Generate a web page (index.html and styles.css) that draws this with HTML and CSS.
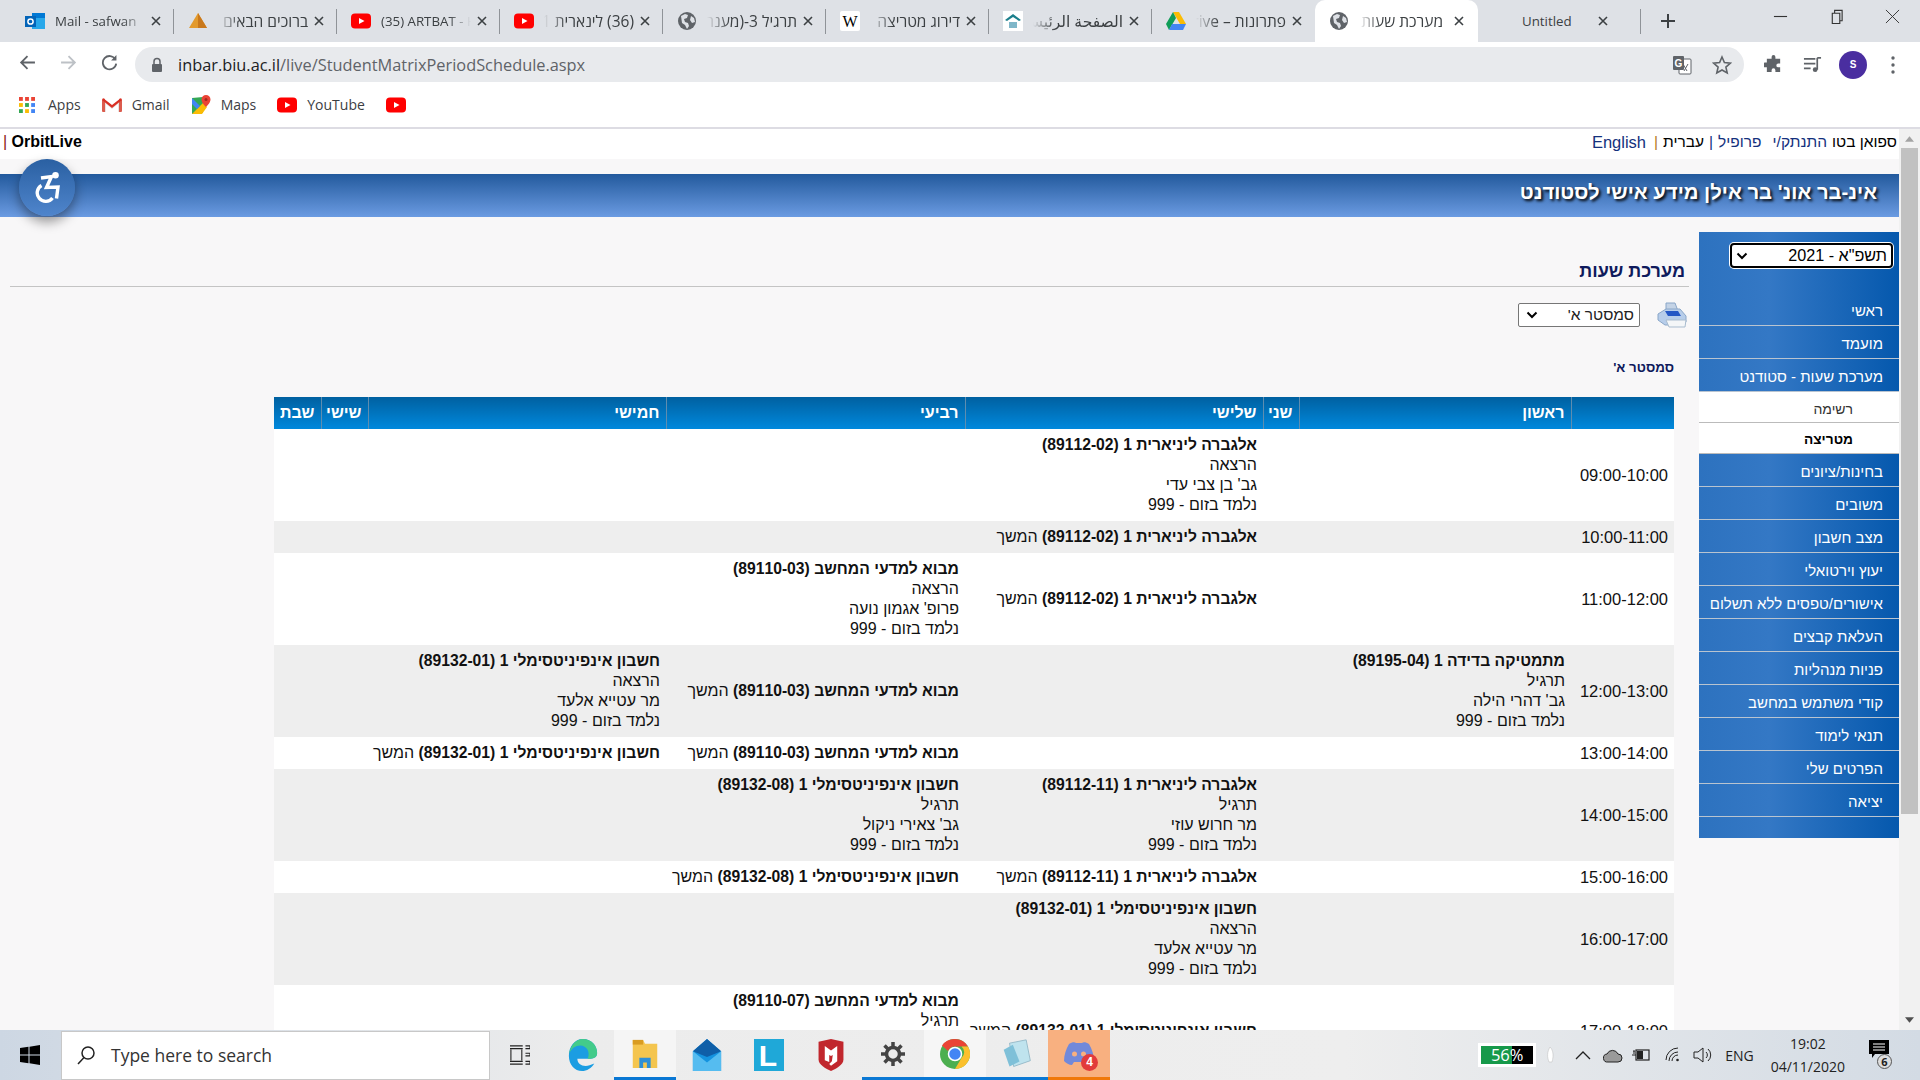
FILE: index.html
```html
<!DOCTYPE html>
<html lang="he">
<head>
<meta charset="UTF-8" />
<title>מערכת שעות</title>
<link rel="stylesheet" href="styles.css">
</head>
<body>

<svg class="defs" width="0" height="0">
  <symbol id="yt" viewBox="0 0 20 20"><rect x="0" y="2.5" width="20" height="15" rx="4" fill="#f00"/><path d="M8 7l5.5 3L8 13z" fill="#fff"/></symbol>
  <symbol id="globe" viewBox="0 0 20 20"><circle cx="10" cy="10" r="9" fill="#5f6368"/><path d="M4 5l4-2 3 1-1 3-3 1 1 3 3 1 1 3-2 3-2-4-3-2zM14 5l3 2 1 4-3 1-2-3z" fill="#dee1e6"/></symbol>
  <symbol id="x" viewBox="0 0 10 10"><path d="M1 1l8 8M9 1l-8 8" stroke="#3c4043" stroke-width="1.6" fill="none"/></symbol>
</svg>

<header class="tabstrip">
  <div class="tab">
    <svg class="favicon" viewBox="0 0 20 20"><rect x="7" y="2" width="13" height="16" fill="#28a8ea"/><rect x="7" y="2" width="13" height="5" fill="#0078d4"/><rect x="0" y="5" width="11" height="11" fill="#0364b8"/><circle cx="5.5" cy="10.5" r="2.6" fill="none" stroke="#fff" stroke-width="1.5"/></svg>
    <span class="tab-title">Mail - safwan</span>
    <svg class="tab-x"><use href="#x"/></svg>
  </div>
  <div class="tab">
    <svg class="favicon" viewBox="0 0 20 20"><path d="M10 2l9 15H1z" fill="#e39a2d"/><path d="M10 2l9 15h-9z" fill="#c9781c"/></svg>
    <span class="tab-title rtl">ברוכים הבאים</span>
    <svg class="tab-x"><use href="#x"/></svg>
  </div>
  <div class="tab">
    <svg class="favicon"><use href="#yt"/></svg>
    <span class="tab-title">(35) ARTBAT - Horizon</span>
    <svg class="tab-x"><use href="#x"/></svg>
  </div>
  <div class="tab">
    <svg class="favicon"><use href="#yt"/></svg>
    <span class="tab-title rtl">(36) לינארית 1 אלגברה</span>
    <svg class="tab-x"><use href="#x"/></svg>
  </div>
  <div class="tab">
    <svg class="favicon"><use href="#globe"/></svg>
    <span class="tab-title rtl">תרגיל 3-(מענה)</span>
    <svg class="tab-x"><use href="#x"/></svg>
  </div>
  <div class="tab">
    <svg class="favicon" viewBox="0 0 20 20"><rect width="20" height="20" rx="2" fill="#fff"/><text x="10" y="15.5" class="wiki-w">W</text></svg>
    <span class="tab-title rtl">דירוג מטריצה</span>
    <svg class="tab-x"><use href="#x"/></svg>
  </div>
  <div class="tab">
    <svg class="favicon" viewBox="0 0 20 20"><rect width="20" height="20" fill="#fff"/><path d="M2 9l8-6 8 6-2 1-6-4-6 4z" fill="#1b7f8c"/><rect x="6" y="11" width="8" height="6" fill="#7fb7c9"/></svg>
    <span class="tab-title rtl">الصفحة الرئيسية</span>
    <svg class="tab-x"><use href="#x"/></svg>
  </div>
  <div class="tab">
    <svg class="favicon" viewBox="0 0 20 20"><path d="M7 1h6l7 12h-6z" fill="#fbbc04"/><path d="M7 1L0 13l3 6 7-12z" fill="#0f9d58"/><path d="M6 13h14l-3 6H3z" fill="#4285f4"/></svg>
    <span class="tab-title rtl">פתרונות – Drive</span>
    <svg class="tab-x"><use href="#x"/></svg>
  </div>
  <div class="tab tab-active">
    <svg class="favicon"><use href="#globe"/></svg>
    <span class="tab-title rtl">מערכת שעות</span>
    <svg class="tab-x"><use href="#x"/></svg>
  </div>
  <div class="tab tab-plain">
    <span class="tab-title tab-untitled">Untitled</span>
    <svg class="tab-x"><use href="#x"/></svg>
  </div>
  <svg class="new-tab" viewBox="0 0 16 16"><path d="M8 1v14M1 8h14" stroke="#3c4043" stroke-width="2"/></svg>
  <div class="window-btns">
    <svg viewBox="0 0 16 16"><path d="M1 8h14" stroke="#333" stroke-width="1.2"/></svg>
    <svg viewBox="0 0 16 16"><path d="M3.5 4.5h8v11h-8zM6 4.5V1.5h8v11h-2.5" stroke="#333" stroke-width="1.2" fill="none"/></svg>
    <svg viewBox="0 0 16 16"><path d="M1 1l14 14M15 1L1 15" stroke="#333" stroke-width="1"/></svg>
  </div>
</header>

<div class="toolbar">
  <svg class="nav-icon" viewBox="0 0 16 16"><path d="M15 8H2M8 2L2 8l6 6" stroke="#5f6368" stroke-width="1.7" fill="none"/></svg>
  <svg class="nav-icon" viewBox="0 0 16 16"><path d="M1 8h13M8 2l6 6-6 6" stroke="#bdc1c6" stroke-width="1.7" fill="none"/></svg>
  <svg class="nav-icon" viewBox="0 0 16 16"><path d="M13.5 5A6.3 6.3 0 1 0 14.3 9" stroke="#5f6368" stroke-width="1.7" fill="none"/><path d="M14.5 1v5h-5z" fill="#5f6368"/></svg>
  <div class="omnibox">
    <svg class="lock" viewBox="0 0 12 16"><path d="M3 7V4.5a3 3 0 0 1 6 0V7" stroke="#5f6368" stroke-width="1.5" fill="none"/><rect x="1" y="7" width="10" height="8" rx="1" fill="#5f6368"/></svg>
    <span class="url"><b>inbar.biu.ac.il</b>/live/StudentMatrixPeriodSchedule.aspx</span>
    <svg class="omni-translate" viewBox="0 0 20 20"><rect x="7" y="4" width="12" height="15" rx="1" fill="#fff" stroke="#5f6368"/><rect x="1" y="1" width="11" height="14" rx="1" fill="#5f6368"/><text x="6.5" y="12" class="g-mark">G</text><path d="M11 9l4 7M16 9l-4 7" stroke="#5f6368"/></svg>
    <svg class="omni-star" viewBox="0 0 20 20"><path d="M10 2l2.4 5.5 6 .6-4.5 4 1.3 5.9L10 15l-5.200 3 1.300-5.900-4.500-4 6-.6z" fill="none" stroke="#5f6368" stroke-width="1.6"/></svg>
  </div>
  <svg class="tool-icon" viewBox="0 0 20 20"><path d="M8 2a2 2 0 0 1 4 0v2h5v5h-2a2 2 0 0 0 0 4h2v5h-5v-2a2 2 0 0 0-4 0v2H3v-5H1a2.5 2.5 0 0 1 0-5h2V4h5z" fill="#5f6368"/></svg>
  <svg class="tool-icon" viewBox="0 0 20 20"><path d="M1 4h12M1 9h12M1 14h7" stroke="#5f6368" stroke-width="1.8"/><path d="M15 3v12.5" stroke="#5f6368" stroke-width="1.8"/><circle cx="12.8" cy="15.5" r="2.5" fill="#5f6368"/><path d="M15 3h4" stroke="#5f6368" stroke-width="1.8"/></svg>
  <div class="avatar">S</div>
  <svg class="tool-dots" viewBox="0 0 4 18"><circle cx="2" cy="2" r="1.7"/><circle cx="2" cy="9" r="1.7"/><circle cx="2" cy="16" r="1.7"/></svg>
</div>

<nav class="bookmarks">
  <span class="bm bm-apps">
    <svg class="bm-icon bm-grid" viewBox="0 0 15 15">
      <rect width="3.6" height="3.6" fill="#ea4335"/><rect x="5.7" width="3.6" height="3.6" fill="#ea4335"/><rect x="11.4" width="3.6" height="3.6" fill="#ea4335"/>
      <rect y="5.7" width="3.6" height="3.6" fill="#fbbc04"/><rect x="5.7" y="5.7" width="3.6" height="3.6" fill="#34a853"/><rect x="11.4" y="5.7" width="3.6" height="3.6" fill="#4285f4"/>
      <rect y="11.4" width="3.6" height="3.6" fill="#34a853"/><rect x="5.7" y="11.4" width="3.6" height="3.6" fill="#fbbc04"/><rect x="11.4" y="11.4" width="3.6" height="3.6" fill="#4285f4"/>
    </svg>Apps</span>
  <span class="bm">
    <svg class="bm-icon" viewBox="0 0 20 16"><path d="M1 15V2l9 7 9-7v13h-3V7l-6 5-6-5v8z" fill="#e9e3e1"/><path d="M0 3l3-1.5V15H1a1 1 0 0 1-1-1zM20 3l-3-1.5V15h2a1 1 0 0 0 1-1z" fill="#db5c4e"/><path d="M1 1l9 7 9-7 1 2-10 8L0 3z" fill="#d93025"/></svg>Gmail</span>
  <span class="bm">
    <svg class="bm-icon" viewBox="0 0 20 20"><path d="M1 3l11-1v16L1 19z" fill="#34a853"/><path d="M1 19L12 8l4 4-5 7z" fill="#fbbc04"/><path d="M1 3l8 8-3 3-5-5z" fill="#4285f4"/><path d="M15 0a4.5 4.5 0 0 1 4.5 4.5C19.5 8 15 12 15 12s-4.5-4-4.5-7.5A4.5 4.5 0 0 1 15 0z" fill="#ea4335"/><circle cx="15" cy="4.5" r="1.5" fill="#a5281e"/></svg>Maps</span>
  <span class="bm"><svg class="bm-icon"><use href="#yt"/></svg>YouTube</span>
  <span class="bm"><svg class="bm-icon"><use href="#yt"/></svg></span>
</nav>

<div class="page">
  <div class="page-body">
    <div class="topline">
      <div class="topline-links" dir="rtl">
        <span class="user">ספואן בטו</span>
        <a class="top-link">התנתק/י</a>
        <a class="top-link top-gap">פרופיל</a>
        <span class="pipe">|</span>
        <span class="user">עברית</span>
        <span class="pipe pipe-orange">|</span>
        <a class="top-link top-en">English</a>
      </div>
      <div class="topline-brand"><span class="pipe-red">|</span> <b>OrbitLive</b></div>
    </div>

    <div class="banner" dir="rtl"><h1>אינ-בר אונ' בר אילן מידע אישי לסטודנט</h1></div>

    <div class="content" dir="rtl">
      <aside class="sidebar">
        <div class="year-wrap">
          <div class="fake-select year-select"><span>תשפ"א - 2021</span><svg viewBox="0 0 12 8"><path d="M1.5 1.5L6 6l4.5-4.5" stroke="#000" stroke-width="2" fill="none"/></svg></div>
        </div>
        <ul class="menu">
          <li>ראשי</li>
          <li>מועמד</li>
          <li>מערכת שעות - סטודנט</li>
          <li class="sub">רשימה</li>
          <li class="sub sub-on">מטריצה</li>
          <li>בחינות/ציונים</li>
          <li>משובים</li>
          <li>מצב חשבון</li>
          <li>יעוץ וירטואלי</li>
          <li>אישורים/טפסים ללא תשלום</li>
          <li>העלאת קבצים</li>
          <li>פניות מנהליות</li>
          <li>קודי משתמש במחשב</li>
          <li>תנאי לימוד</li>
          <li>הפרטים שלי</li>
          <li>יציאה</li>
        </ul>
      </aside>

      <main class="main">
        <h2 class="page-title">מערכת שעות</h2>
        <div class="tools-row">
          <svg class="printer" viewBox="0 0 30 26">
            <path d="M9 1h9l3 8H9z" fill="#c4d3e6" stroke="#8aa6c8"/>
            <path d="M1 12l8-5h14l6 7v6l-8 3H8l-7-5z" fill="#b7cdea" stroke="#8aa6c8"/>
            <path d="M8 9h13l3 5H11z" fill="#2457c5"/>
            <path d="M9 18h20l-1 7H12z" fill="#f4f6f8" stroke="#a9bccf"/>
          </svg>
          <div class="fake-select term-select"><span>סמסטר א'</span><svg viewBox="0 0 12 8"><path d="M1.5 1.5L6 6l4.5-4.5" stroke="#000" stroke-width="2" fill="none"/></svg></div>
        </div>
        <div class="term-label">סמסטר א'</div>

        <table class="schedule">
          <thead>
            <tr>
              <th class="c-time"></th>
              <th class="c-sun">ראשון</th>
              <th class="c-mon">שני</th>
              <th class="c-tue">שלישי</th>
              <th class="c-wed">רביעי</th>
              <th class="c-thu">חמישי</th>
              <th class="c-fri">שישי</th>
              <th class="c-sat">שבת</th>
            </tr>
          </thead>
          <tbody>
            <tr>
              <td class="hour">09:00-10:00</td><td></td><td></td>
              <td><b>אלגברה ליניארית 1 (89112-02)</b><br>הרצאה<br>גב' בן צבי עדי<br>נלמד בזום - 999</td>
              <td></td><td></td><td></td><td></td>
            </tr>
            <tr class="alt">
              <td class="hour">10:00-11:00</td><td></td><td></td>
              <td><b>אלגברה ליניארית 1 (89112-02)</b> המשך</td>
              <td></td><td></td><td></td><td></td>
            </tr>
            <tr>
              <td class="hour">11:00-12:00</td><td></td><td></td>
              <td><b>אלגברה ליניארית 1 (89112-02)</b> המשך</td>
              <td><b>מבוא למדעי המחשב (89110-03)</b><br>הרצאה<br>פרופ' אגמון נועה<br>נלמד בזום - 999</td>
              <td></td><td></td><td></td>
            </tr>
            <tr class="alt">
              <td class="hour">12:00-13:00</td>
              <td><b>מתמטיקה בדידה 1 (89195-04)</b><br>תרגיל<br>גב' דהרי הילה<br>נלמד בזום - 999</td>
              <td></td><td></td>
              <td><b>מבוא למדעי המחשב (89110-03)</b> המשך</td>
              <td><b>חשבון אינפיניטסימלי 1 (89132-01)</b><br>הרצאה<br>מר עטייא אלעד<br>נלמד בזום - 999</td>
              <td></td><td></td>
            </tr>
            <tr>
              <td class="hour">13:00-14:00</td><td></td><td></td><td></td>
              <td><b>מבוא למדעי המחשב (89110-03)</b> המשך</td>
              <td><b>חשבון אינפיניטסימלי 1 (89132-01)</b> המשך</td>
              <td></td><td></td>
            </tr>
            <tr class="alt">
              <td class="hour">14:00-15:00</td><td></td><td></td>
              <td><b>אלגברה ליניארית 1 (89112-11)</b><br>תרגיל<br>מר חרוש עוזי<br>נלמד בזום - 999</td>
              <td><b>חשבון אינפיניטסימלי 1 (89132-08)</b><br>תרגיל<br>גב' צאירי ניקול<br>נלמד בזום - 999</td>
              <td></td><td></td><td></td>
            </tr>
            <tr>
              <td class="hour">15:00-16:00</td><td></td><td></td>
              <td><b>אלגברה ליניארית 1 (89112-11)</b> המשך</td>
              <td><b>חשבון אינפיניטסימלי 1 (89132-08)</b> המשך</td>
              <td></td><td></td><td></td>
            </tr>
            <tr class="alt">
              <td class="hour">16:00-17:00</td><td></td><td></td>
              <td><b>חשבון אינפיניטסימלי 1 (89132-01)</b><br>הרצאה<br>מר עטייא אלעד<br>נלמד בזום - 999</td>
              <td></td><td></td><td></td><td></td>
            </tr>
            <tr>
              <td class="hour">17:00-18:00</td><td></td><td></td>
              <td><b>חשבון אינפיניטסימלי 1 (89132-01)</b> המשך</td>
              <td><b>מבוא למדעי המחשב (89110-07)</b><br>תרגיל<br>מר חרוש עוזי<br>נלמד בזום - 999</td>
              <td></td><td></td><td></td>
            </tr>
          </tbody>
        </table>
      </main>
    </div>
  </div>

  <div class="scrollbar">
    <svg class="scroll-arrow" viewBox="0 0 10 6"><path d="M5 0l5 6H0z" fill="#a3a3a3"/></svg>
    <div class="scroll-thumb"></div>
    <svg class="scroll-arrow scroll-down" viewBox="0 0 10 6"><path d="M5 6L0 0h10z" fill="#505050"/></svg>
  </div>

  <button class="a11y-btn">
    <svg viewBox="0 0 25 32"><circle cx="20.5" cy="3.3" r="3.3" fill="#fff"/><path d="M6 6l10.5-1.500-5 11 11.500-.5-1.500 11.500" stroke="#fff" stroke-width="3.4" fill="none"/><path d="M6.500 13.500A8.500 8.500 0 1 0 17.500 26" stroke="#fff" stroke-width="3.4" fill="none"/></svg>
  </button>
</div>

<footer class="taskbar">
  <svg class="win-logo" viewBox="0 0 20 20"><path d="M0 3l8.500-1.200v7.700H0zM9.500 1.700L20 0v9.500H9.500zM0 10.500h8.500v7.700L0 17zM9.500 10.500H20V20L9.500 18.300z" fill="#000"/></svg>
  <div class="search-box">
    <svg viewBox="0 0 20 20"><circle cx="12" cy="8" r="6" fill="none" stroke="#222" stroke-width="1.5"/><path d="M8 12.5L2 19" stroke="#222" stroke-width="1.5"/></svg>
    <span>Type here to search</span>
  </div>
  <svg class="task-view" viewBox="0 0 22 22"><path d="M0 1h14M0 4h14M0 18h14M0 21h14M1 5v12M13 5v12M17 1h5v3h-5M17 9h5v3h-5M17 18h5v3h-5" stroke="#222" stroke-width="1.2" fill="none"/></svg>

  <div class="task-app">
    <svg viewBox="0 0 30 34"><path d="M15 0c9 0 15 7 15 15 0 4-3 6-7 6H9c0 6 6 9 13 7l5-2c-3 5-8 8-13 8C6 34 0 27 0 18 0 8 6 0 15 0z" fill="#1b9de2"/><path d="M15 0c9 0 15 7 15 15 0 4-3 6-7 6h-3c3-7-1-14-8-14-5 0-9 3-12 9C2 7 7 0 15 0z" fill="#43cb8a"/></svg>
  </div>
  <div class="task-app app-on">
    <svg viewBox="0 0 28 34"><path d="M1 2h11l2 4h13v26H1z" fill="#f4c54e"/><rect x="1" y="2" width="11" height="5" fill="#d99c21"/><path d="M8 32V21h12v11h-4v-6h-4v6z" fill="#2e8fd6"/></svg>
  </div>
  <div class="task-app">
    <svg viewBox="0 0 30 34"><path d="M15 0l15 13v21H0V13z" fill="#1493df"/><path d="M15 0l15 13-15 6-15-6z" fill="#0f5fa8"/><path d="M0 13l15 12 15-12v21H0z" fill="#55bcf0"/></svg>
  </div>
  <div class="task-app">
    <svg viewBox="0 0 30 32"><rect width="30" height="32" fill="#1fa8d8"/><text x="14" y="27" class="l-mark">L</text></svg>
  </div>
  <div class="task-app">
    <svg viewBox="0 0 28 36"><path d="M0 3l14-3 14 3v20c0 6-8 10-14 13C8 33 0 29 0 23z" fill="#c1272d"/><path d="M7 8l7 5 7-5v17l-7 5-2-2 3-3 1-7-2 1-2-1v8l-5-2z" fill="#fff"/></svg>
  </div>
  <div class="task-app app-line app-gear">
    <svg viewBox="0 0 24 24"><circle cx="12" cy="12" r="6.5" fill="none" stroke="#444" stroke-width="3.5"/><path d="M12 0v5M12 19v5M0 12h5M19 12h5M3.500 3.500l3.500 3.500M17 17l3.500 3.500M20.500 3.500L17 7M7 17l-3.500 3.500" stroke="#444" stroke-width="3.5"/></svg>
  </div>
  <div class="task-app app-line app-lit">
    <svg viewBox="0 0 30 30"><circle cx="15" cy="15" r="15" fill="#4caf50"/><path d="M15 0a15 15 0 0 1 13 7.500H15a7.500 7.500 0 0 0-7 4.500L2 6.500A15 15 0 0 1 15 0z" fill="#ea4335"/><path d="M28 7.500A15 15 0 0 1 15 30l6.500-11a7.500 7.500 0 0 0 0-11.500z" fill="#fbc02d"/><circle cx="15" cy="15" r="6.500" fill="#4285f4" stroke="#fff" stroke-width="1.5"/></svg>
  </div>
  <div class="task-app app-line">
    <svg viewBox="0 0 36 36"><path d="M9 5l20-4 5 25-20 7z" fill="#bfe3ee" stroke="#8fb4c4"/><path d="M2 13l11-6 8 20-12 6z" fill="#7fc0d8"/></svg>
  </div>
  <div class="task-app app-discord">
    <svg viewBox="0 0 30 24"><path d="M5 2c3-2 6-2 7-1h6c1-1 4-1 7 1 3 5 5 11 5 17-2 2-5 4-8 4l-2-3H10l-2 3c-3 0-6-2-8-4C0 13 2 7 5 2z" fill="#7289da"/><circle cx="10.5" cy="12" r="2.5" fill="#f8b080"/><circle cx="19.5" cy="12" r="2.5" fill="#f8b080"/></svg>
    <span class="discord-badge">4</span>
  </div>

  <div class="tray">
    <div class="battery-meter">56%</div>
    <svg class="tray-speck" viewBox="0 0 8 18"><path d="M4 1c3 3 4 8 2 15H3C1 11 1 6 4 1z" fill="#fff" stroke="#bbb" stroke-width="0.5"/></svg>
    <svg class="tray-chevron" viewBox="0 0 16 10"><path d="M1 9l7-7 7 7" stroke="#222" stroke-width="1.3" fill="none"/></svg>
    <svg class="tray-icon tray-cloud" viewBox="0 0 20 16"><path d="M5 15a4 4 0 0 1-1-8 6 6 0 0 1 11 0 4 4 0 0 1 0 8z" fill="#9a9a9a" stroke="#222"/></svg>
    <svg class="tray-icon tray-power" viewBox="0 0 20 16"><rect x="5" y="3" width="13" height="10" fill="none" stroke="#222" stroke-width="1.2"/><rect x="6" y="4" width="6" height="8" fill="#222"/><path d="M1 8h4M3 4v3M2 4h2" stroke="#222"/></svg>
    <svg class="tray-icon tray-wifi" viewBox="0 0 20 16"><path d="M1 13a12 12 0 0 1 12-12M4 14a9 9 0 0 1 9-9M7 14a6 6 0 0 1 6-6" stroke="#222" fill="none"/><circle cx="12.5" cy="13" r="1.3" fill="#222"/></svg>
    <svg class="tray-icon" viewBox="0 0 20 18"><path d="M1 6h4l5-4v14l-5-4H1z" fill="none" stroke="#222"/><path d="M13 6a4 4 0 0 1 0 6M15 3a8 8 0 0 1 0 12" stroke="#222" fill="none"/></svg>
    <span class="tray-lang">ENG</span>
    <div class="clock"><span>19:02</span><span>04/11/2020</span></div>
    <div class="notify">
      <svg viewBox="0 0 20 18"><path d="M0 0h20v14H6l-3 4v-4H0z" fill="#000"/><path d="M4 4h12M4 7h12M4 10h12" stroke="#fff"/></svg>
      <span class="notify-count">6</span>
    </div>
  </div>
</footer>

</body>
</html>
```

FILE: styles.css
```css
* {
  box-sizing: border-box;
}

html, body {
  height: 100%;
}

body {
  margin: 0;
  display: flex;
  flex-direction: column;
  overflow: hidden;
  font-family: "Liberation Sans", "DejaVu Sans", sans-serif;
  color: #000;
  background: #fff;
}

.defs {
  position: absolute;
}

/* browser tabs */
.tabstrip {
  flex: none;
  height: 42px;
  display: flex;
  align-items: stretch;
  padding-left: 11px;
  background: #dee1e6;
}

.tab {
  position: relative;
  flex: none;
  width: 163px;
  display: flex;
  align-items: center;
  padding-left: 14px;
  font-family: "Open Sans", "Liberation Sans", "DejaVu Sans", sans-serif;
  font-size: 13.3px;
  color: #3c4043;
}

.tab::after {
  content: "";
  position: absolute;
  right: 0;
  top: 9px;
  height: 25px;
  width: 1px;
  background: #8f9398;
}

.tab:nth-child(8)::after,
.tab-active::after {
  display: none;
}

.tab-active {
  background: #fff;
  border-radius: 10px 10px 0 0;
}

.favicon {
  flex: none;
  width: 20px;
  height: 20px;
  margin-right: 10px;
}

.tab-title {
  flex: none;
  width: 90px;
  overflow: hidden;
  white-space: nowrap;
  -webkit-mask-image: linear-gradient(to right, #000 75%, transparent);
  mask-image: linear-gradient(to right, #000 75%, transparent);
}

.tab-title.rtl {
  direction: rtl;
  font-size: 15.5px;
  -webkit-mask-image: linear-gradient(to right, transparent, #000 25%);
  mask-image: linear-gradient(to right, transparent, #000 25%);
}

.tab-active .tab-title.rtl {
  width: 84px;
  margin-right: 5px;
}

.tab-untitled {
  margin-left: 30px;
  width: 60px;
  -webkit-mask-image: none;
  mask-image: none;
}

.tab-plain {
  justify-content: flex-start;
}

.tab-x {
  flex: none;
  width: 10px;
  height: 10px;
  margin-left: 6px;
}

.tab-plain .tab-x {
  margin-left: 16px;
}

.wiki-w {
  font-family: "Liberation Serif", serif;
  font-size: 16px;
  text-anchor: middle;
}

.new-tab {
  flex: none;
  width: 16px;
  height: 16px;
  margin: 13px 0 0 19px;
}

.window-btns {
  margin-left: auto;
  display: flex;
  gap: 41px;
  padding: 9px 20px 0 0;
}

.window-btns svg {
  width: 15px;
  height: 15px;
}

/* toolbar */
.toolbar {
  flex: none;
  height: 40px;
  display: flex;
  align-items: center;
  padding: 0 0 0 19px;
  background: #fff;
}

.nav-icon {
  flex: none;
  width: 17px;
  height: 17px;
  margin-right: 24px;
}

.omnibox {
  flex: none;
  width: 1609px;
  height: 35px;
  margin: 5px 0 0 -7px;
  display: flex;
  align-items: center;
  padding: 0 12px 0 16px;
  border-radius: 18px;
  background: #e8eaed;
}

.lock {
  width: 12px;
  height: 16px;
  margin-right: 15px;
}

.url {
  font-family: "Open Sans", "Liberation Sans", sans-serif;
  font-size: 16.35px;
  color: #5f6368;
}

.url b {
  font-weight: 400;
  color: #202124;
}

.omni-translate {
  margin-left: auto;
  width: 20px;
  height: 20px;
}

.g-mark {
  font-size: 10px;
  font-weight: 700;
  fill: #fff;
  text-anchor: middle;
}

.omni-star {
  width: 20px;
  height: 20px;
  margin-left: 20px;
}

.tool-icon {
  flex: none;
  width: 19px;
  height: 19px;
  margin: 5px 0 0 20px;
}

.avatar {
  flex: none;
  width: 28px;
  height: 28px;
  margin: 5px 0 0 17px;
  border-radius: 50%;
  background: #4a2ea0;
  color: #fff;
  font-size: 10px;
  font-weight: 700;
  line-height: 28px;
  text-align: center;
}

.tool-dots {
  flex: none;
  width: 4px;
  height: 18px;
  margin: 5px 0 0 24px;
  fill: #5f6368;
}

/* bookmarks */
.bookmarks {
  flex: none;
  height: 45px;
  display: flex;
  align-items: center;
  gap: 21px;
  padding-left: 19px;
  background: #fff;
  font-family: "Open Sans", "Liberation Sans", sans-serif;
  font-size: 14px;
  color: #3c4043;
}

.bm {
  display: flex;
  align-items: center;
  gap: 10px;
}

.bm-icon {
  width: 20px;
  height: 20px;
}

.bm-grid {
  width: 16px;
  height: 16px;
  margin-right: 3px;
}

/* page */
.page {
  position: relative;
  flex: 1;
  min-height: 0;
  display: flex;
  overflow: hidden;
  border-top: 2px solid #dddce3;
}

.page-body {
  flex: none;
  width: 1899px;
  background: #f8f7f8;
}

.topline {
  height: 30px;
  display: flex;
  flex-direction: row-reverse;
  justify-content: space-between;
  align-items: center;
  padding: 0 2px 4px 3px;
  background: #fff;
  font-size: 15.5px;
}

.topline-brand {
  font-size: 16px;
}

.topline-links {
  display: flex;
  align-items: center;
  gap: 5px;
}

.top-link {
  color: #14317d;
}

.top-gap {
  margin-right: 6px;
}

.top-en {
  margin-right: 3px;
  font-size: 16.5px;
}

.pipe {
  color: #14317d;
}

.pipe-orange {
  color: #b5761a;
}

.pipe-red {
  color: #8a1a10;
}

.banner {
  height: 43px;
  margin-top: 15px;
  padding: 0 22px 6px;
  display: flex;
  align-items: center;
  background: linear-gradient(#235a9d, #6b9be2);
}

.banner h1 {
  margin: 0;
  font-size: 20.3px;
  color: #fff;
  text-shadow: 2px 2px 3px #000;
}

.content {
  display: flex;
  margin-top: 15px;
}

.sidebar {
  flex: none;
  width: 200px;
  height: 606px;
  background: linear-gradient(to left, #0558ad, #3478c5 65%, #2d72bf);
}

.year-wrap {
  height: 61px;
  padding: 11px 6px 0 0;
}

.fake-select {
  display: flex;
  justify-content: space-between;
  align-items: center;
  background: #fff;
  color: #000;
  font-size: 15.5px;
}

.fake-select svg {
  width: 12px;
  height: 8px;
}

.year-select {
  width: 163px;
  height: 25px;
  padding: 0 4px;
  border: 2px solid #000;
  border-radius: 4px;
  box-shadow: 0 0 0 1px #fff;
  font-size: 16.2px;
}

.menu {
  margin: 0;
  padding: 0;
  list-style: none;
}

.menu li {
  height: 33px;
  padding: 0 16px 0 0;
  border-bottom: 1px solid #b9c4d0;
  color: #fff;
  font-size: 15px;
  line-height: 36px;
}

.menu .sub {
  height: 31px;
  padding-right: 46px;
  background: #fff;
  border-bottom-color: #bbb;
  color: #333;
  font-size: 14px;
  line-height: 34px;
}

.menu .sub-on {
  color: #000;
  font-size: 13.7px;
  font-weight: 700;
}

.main {
  flex: none;
  width: 1699px;
  padding: 0 10px;
}

.page-title {
  height: 55px;
  margin: 0;
  padding: 29px 4px 0 0;
  border-bottom: 1px solid #c4c4c4;
  color: #0f1a5c;
  font-size: 18px;
}

.tools-row {
  display: flex;
  align-items: center;
  gap: 17px;
  padding: 15px 2px 0 0;
}

.printer {
  flex: none;
  width: 30px;
  height: 26px;
}

.term-select {
  width: 122px;
  height: 24px;
  padding: 0 5px 0 7px;
  border: 1px solid #767676;
  border-radius: 2px;
  color: #222;
}

.term-label {
  margin-top: 30px;
  padding-right: 15px;
  color: #0f1a5c;
  font-size: 13.3px;
  font-weight: 700;
  line-height: 20px;
}

.schedule {
  width: 1400px;
  margin: 19px 15px 0 0;
  table-layout: fixed;
  border-collapse: collapse;
  background: #fff;
  font-size: 16px;
  line-height: 20px;
  color: #111;
}

.schedule th {
  height: 32px;
  padding: 0 6px;
  border-left: 1px solid #5e8db0;
  background: linear-gradient(#0060a0, #0088dc);
  color: #fff;
  font-size: 16px;
  font-weight: 700;
  text-align: right;
}

.schedule th:last-child {
  border-left: 0;
}

.schedule td {
  height: 32px;
  padding: 6px;
  text-align: right;
  vertical-align: middle;
  white-space: nowrap;
}

.schedule td b {
  font-size: 15.7px;
}

.schedule td.hour {
  font-size: 16.5px;
}

.schedule tbody tr {
  background: #fff;
}

.schedule tbody tr.alt {
  background: #eee;
}

.c-time { width: 103px; }
.c-sun { width: 272px; }
.c-mon { width: 36px; }
.c-tue { width: 298px; }
.c-wed { width: 299px; }
.c-thu { width: 298px; }
.c-fri { width: 47px; }
.c-sat { width: 47px; }

/* scrollbar */
.scrollbar {
  flex: none;
  width: 21px;
  display: flex;
  flex-direction: column;
  align-items: center;
  background: #f1f1f1;
}

.scroll-arrow {
  width: 9px;
  height: 6px;
  margin: 7px 0 6px;
}

.scroll-thumb {
  width: 17px;
  height: 666px;
  background: #c1c1c1;
}

.scroll-down {
  margin-top: auto;
  margin-bottom: 7px;
}

.a11y-btn {
  position: absolute;
  left: 19px;
  top: 30px;
  width: 56px;
  height: 57px;
  padding: 0;
  border: 0;
  border-radius: 50%;
  display: flex;
  align-items: center;
  justify-content: center;
  background: linear-gradient(#2a60a2, #4f85cc);
  box-shadow: 0 6px 12px rgba(0, 0, 0, 0.4);
}

.a11y-btn svg {
  width: 25px;
  height: 32px;
}

/* windows taskbar */
.taskbar {
  flex: none;
  height: 50px;
  display: flex;
  align-items: center;
  background: linear-gradient(to right, #cdd7e3, #ececec 30%, #eeeeee 70%, #d3dbe4);
}

.win-logo {
  flex: none;
  width: 20px;
  height: 20px;
  margin: 0 21px 0 20px;
}

.search-box {
  flex: none;
  width: 429px;
  height: 49px;
  display: flex;
  align-items: center;
  gap: 15px;
  padding-left: 14px;
  border: 1px solid #c8c8c8;
  background: #fff;
  font-family: "Open Sans", "Liberation Sans", sans-serif;
  font-size: 17.5px;
  color: #333;
}

.search-box svg {
  width: 20px;
  height: 20px;
}

.task-view {
  flex: none;
  width: 20px;
  height: 20px;
  margin: 0 22px 0 20px;
}

.task-app {
  position: relative;
  flex: none;
  width: 62px;
  height: 50px;
  display: flex;
  align-items: center;
  justify-content: center;
}

.task-app svg {
  width: 30px;
  height: 32px;
}

.l-mark {
  font-size: 30px;
  font-weight: 700;
  fill: #fff;
  text-anchor: middle;
}

.app-gear svg {
  width: 24px;
  height: 24px;
}

.app-on {
  background: #f5f5f5;
  border-bottom: 3px solid #0a78d4;
}

.app-line {
  border-bottom: 3px solid #0a78d4;
}

.app-lit {
  background: #f6f6f6;
}

.app-discord {
  background: #f8b080;
  border-bottom: 3px solid #f0780a;
}

.discord-badge {
  position: absolute;
  right: 12px;
  bottom: 6px;
  width: 17px;
  height: 17px;
  border-radius: 50%;
  background: #e23b3b;
  color: #fff;
  font-size: 12px;
  font-weight: 700;
  line-height: 17px;
  text-align: center;
}

.tray {
  margin-left: auto;
  display: flex;
  align-items: center;
  font-family: "Open Sans", "Liberation Sans", sans-serif;
  color: #222;
}

.battery-meter {
  width: 58px;
  height: 24px;
  margin-right: 10px;
  border: 3px solid #fff;
  background: linear-gradient(to right, #16994a 60%, #000 60%);
  color: #fff;
  font-size: 16.5px;
  line-height: 18px;
  text-align: center;
}

.tray-speck {
  width: 8px;
  height: 18px;
  margin-right: 21px;
}

.tray-chevron {
  width: 16px;
  height: 10px;
  margin-right: 12px;
}

.tray-icon {
  width: 20px;
  height: 18px;
  margin-right: 11px;
}

.tray-cloud {
  margin-right: 8px;
}

.tray-power {
  margin-right: 14px;
}

.tray-wifi {
  margin-right: 8px;
}

.tray-lang {
  margin: 0 17px 0 1px;
  font-size: 14px;
}

.clock {
  display: flex;
  flex-direction: column;
  align-items: center;
  gap: 4px;
  margin-right: 24px;
  font-size: 14px;
  line-height: 19px;
}

.notify {
  position: relative;
  width: 22px;
  height: 30px;
  margin-right: 29px;
}

.notify svg {
  width: 20px;
  height: 18px;
}

.notify-count {
  position: absolute;
  left: 8px;
  top: 14px;
  width: 15px;
  height: 15px;
  border: 1px solid #555;
  border-radius: 50%;
  background: #ddd;
  font-size: 11px;
  font-weight: 700;
  line-height: 13px;
  text-align: center;
}
```
